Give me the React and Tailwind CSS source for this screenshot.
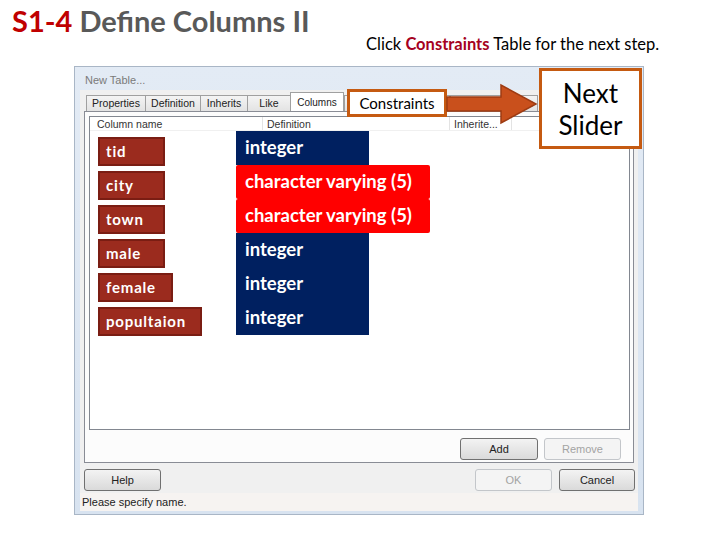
import React from "react";

const NAMES = [
  { name: "tid", w: "w-[67px]" },
  { name: "city", w: "w-[67px]" },
  { name: "town", w: "w-[67px]" },
  { name: "male", w: "w-[67px]" },
  { name: "female", w: "w-[75px]" },
  { name: "popultaion", w: "w-[104px]" },
];

const DEFS = [
  { text: "integer", red: false },
  { text: "character varying (5)", red: true },
  { text: "character varying (5)", red: true },
  { text: "integer", red: false },
  { text: "integer", red: false },
  { text: "integer", red: false },
];

const TABS = [
  { label: "Properties", w: "w-[60px]" },
  { label: "Definition", w: "w-[56px]" },
  { label: "Inherits", w: "w-[48px]" },
  { label: "Like", w: "w-[44px]" },
];

const WinButton = ({ label, disabled, className = "" }) => (
  <div
    className={
      "h-[22px] flex items-center justify-center rounded-[3px] border text-[11px] " +
      (disabled
        ? "border-[#c3c6ca] bg-[#f4f4f4] text-[#a3a3a3] "
        : "border-[#707070] bg-gradient-to-b from-[#f3f3f3] to-[#dadada] text-[#222] ") +
      className
    }
  >
    {label}
  </div>
);

export default function App() {
  return (
    <div
      className="relative w-[720px] h-[540px] bg-white overflow-hidden"
      style={{ fontFamily: "Lato, 'Open Sans', sans-serif" }}
    >
      {/* header */}
      <div className="flex items-start h-[66px]">
        <div className="w-[366px] pl-[12px] pt-[4px] text-[29px] font-bold leading-[34px] text-[#595959]">
          <span className="text-[#c00000]">S1-4</span> Define Columns II
        </div>
        <div className="pt-[34px] text-[16.5px] leading-[20px] text-black">
          Click <span className="font-bold text-[#a50021]">Constraints</span> Table for the next step.
        </div>
      </div>

      {/* dialog screenshot */}
      <div
        className="ml-[74px] w-[570px] h-[449px] flex flex-col border border-[#a9b6c6] bg-gradient-to-b from-[#e3ebf5] to-[#d8e3f0]"
        style={{ fontFamily: "'Liberation Sans', Arial, sans-serif" }}
      >
        <div className="h-[23px] flex items-end pl-[10px] pb-[2px] text-[11px] text-[#7a7a7a]">
          New Table...
        </div>
        <div className="mx-[5px] h-[421px] flex flex-col bg-[#f0f0f0]">
          {/* tabs */}
          <div className="flex items-end h-[21px] pl-[6px]">
            {TABS.map((t) => (
              <div
                key={t.label}
                className={
                  "h-[16px] flex items-center justify-center border border-b-0 border-[#a0a0a0] -mr-px bg-gradient-to-b from-[#f4f4f4] to-[#e3e3e3] text-[10.5px] text-[#222] " +
                  t.w
                }
              >
                {t.label}
              </div>
            ))}
            <div className="h-[19px] w-[54px] flex items-center justify-center border border-b-0 border-[#a0a0a0] bg-white text-[10px] text-[#222]">
              Columns
            </div>
            <div className="h-[16px] w-[106px] border border-b-0 border-[#a0a0a0] bg-gradient-to-b from-[#f4f4f4] to-[#e3e3e3]" />
            <div className="h-[16px] w-[88px] flex items-center justify-end pr-[4px] border border-b-0 border-[#a0a0a0] bg-gradient-to-b from-[#f4f4f4] to-[#e3e3e3] text-[10.5px] text-[#222]">
              Privileges
            </div>
          </div>

          {/* tab page */}
          <div className="mx-[4px] h-[352px] flex flex-col border border-[#898c95] bg-[#fcfcfc] pl-[4px] pr-[3px] pt-[4px]">
            <div className="h-[314px] border border-[#828790] bg-white flex flex-col">
              <div className="h-[14px] flex text-[10.5px] text-[#333] border-b border-[#f0f0f0]">
                <div className="w-[173px] pl-[7px] border-r border-[#e3e3e3] leading-[14px]">Column name</div>
                <div className="w-[187px] pl-[4px] border-r border-[#e3e3e3] leading-[14px]">Definition</div>
                <div className="w-[62px] pl-[4px] border-r border-[#e3e3e3] leading-[14px]">Inherite...</div>
              </div>
              <div className="flex items-start" style={{ fontFamily: "Lato, 'Open Sans', sans-serif" }}>
                <div className="w-[146px] pl-[8px] pt-[6px] flex flex-col gap-[5px]">
                  {NAMES.map((n) => (
                    <div
                      key={n.name}
                      className={
                        "h-[29px] flex items-center pl-[6px] bg-[#9b2b1e] border-2 border-[#7a1d13] text-white text-[15px] font-bold tracking-[0.8px] " +
                        n.w
                      }
                    >
                      {n.name}
                    </div>
                  ))}
                </div>
                <div className="flex flex-col">
                  {DEFS.map((d, i) => (
                    <div
                      key={i}
                      className={
                        "h-[34px] flex items-center pl-[9px] pb-[1px] text-white text-[18.5px] font-bold whitespace-nowrap " +
                        (d.red ? "w-[194px] bg-[#ff0000] rounded-[2px]" : "w-[133px] bg-[#002060]")
                      }
                    >
                      {d.text}
                    </div>
                  ))}
                </div>
              </div>
            </div>
            <div className="mt-[8px] flex justify-end gap-[6px] pr-[9px]">
              <WinButton label="Add" className="w-[78px]" />
              <WinButton label="Remove" disabled className="w-[77px]" />
            </div>
          </div>

          {/* bottom buttons */}
          <div className="mt-[6px] flex items-center px-[4px]">
            <WinButton label="Help" className="w-[77px]" />
            <div className="flex-1" />
            <WinButton label="OK" disabled className="w-[77px] mr-[7px]" />
            <WinButton label="Cancel" className="w-[76px] -mr-[1px]" />
          </div>
          <div className="mt-[2px] flex-1 flex items-center pl-[2px] bg-[#f6f3f1] text-[11px] text-[#222]">
            Please specify name.
          </div>
        </div>
      </div>

      {/* annotations */}
      <div className="absolute left-[347px] top-[89px] w-[100px] h-[28px] flex items-center justify-center border-[3px] border-[#c55a11] bg-white text-[15px] text-black">
        Constraints
      </div>
      <svg className="absolute left-[446px] top-[83px]" width="94" height="42" viewBox="0 0 94 42">
        <path d="M1 14 H55 V2 L90 21 L55 40 V28 H1 Z" fill="#c9501c" stroke="#9e3b12" strokeWidth="1.5" />
      </svg>
      <div className="absolute left-[539px] top-[68px] w-[103px] h-[81px] flex flex-col items-center justify-center border-[3px] border-[#c55a11] bg-white text-[26px] leading-[32px] text-black">
        <span>Next</span>
        <span>Slider</span>
      </div>
    </div>
  );
}
